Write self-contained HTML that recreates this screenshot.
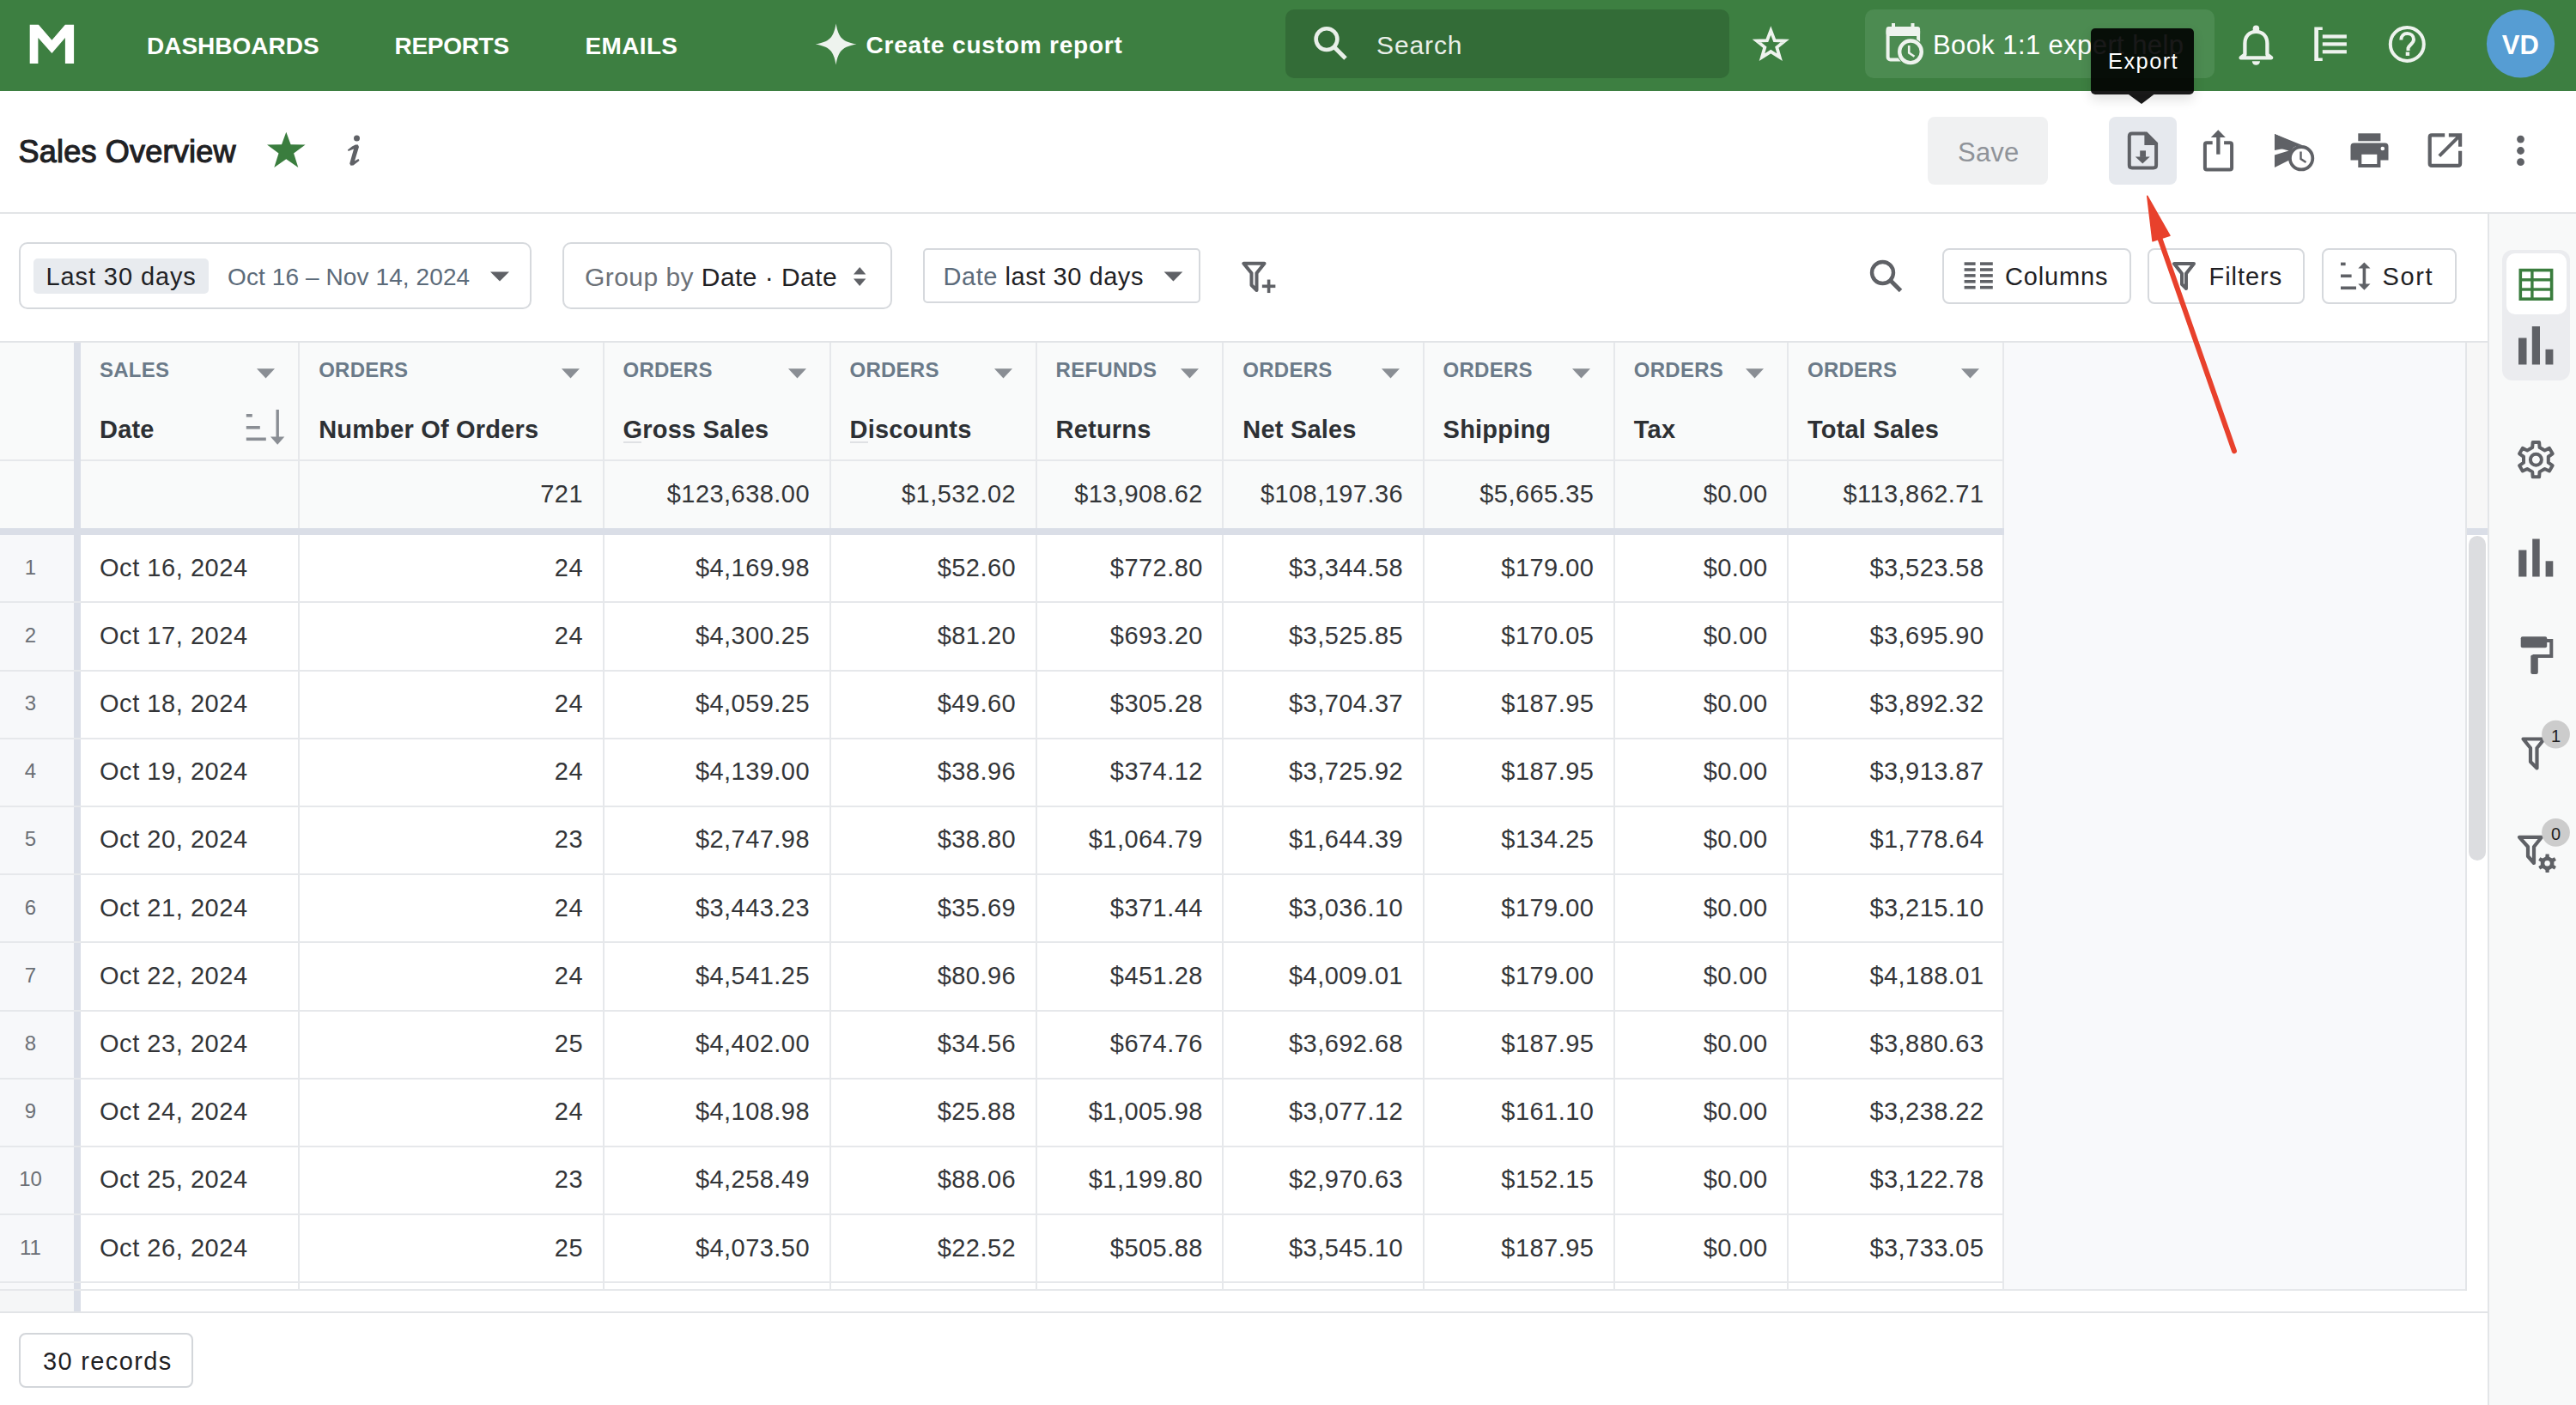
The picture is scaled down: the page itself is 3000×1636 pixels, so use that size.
<!DOCTYPE html>
<html><head><meta charset="utf-8"><style>
html,body{margin:0;padding:0;}
body{width:3000px;height:1636px;position:relative;overflow:hidden;background:#fff;font-family:'Liberation Sans', sans-serif;}
.t{position:absolute;white-space:nowrap;}
.r{position:absolute;}
svg.r{overflow:visible;}
</style></head><body>
<div class="r" style="left:0.00px;top:0.00px;width:3000.00px;height:106.00px;background:#3d7f41;"></div>
<svg class="r" style="left:0px;top:0px;" width="120" height="106" viewBox="0 0 120 106"><polygon fill="#fff" points="34.7,28.8 44.9,28.8 60.4,46.8 75.9,28.8 86.1,28.8 86.1,74.1 75.9,74.1 75.9,44.1 60.4,62.1 44.4,44.1 44.4,74.1 34.7,74.1"/></svg>
<div class="t" style="top:39.50px;font-size:28px;line-height:28px;color:#ffffff;font-weight:700;letter-spacing:0px;font-family:'Liberation Sans', sans-serif;left:171.00px;">DASHBOARDS</div>
<div class="t" style="top:39.70px;font-size:28px;line-height:28px;color:#ffffff;font-weight:700;letter-spacing:-0.3px;font-family:'Liberation Sans', sans-serif;left:459.50px;">REPORTS</div>
<div class="t" style="top:39.70px;font-size:28px;line-height:28px;color:#ffffff;font-weight:700;letter-spacing:0.35px;font-family:'Liberation Sans', sans-serif;left:681.50px;">EMAILS</div>
<svg class="r" style="left:900px;top:0px;" width="120" height="106" viewBox="900 0 120 106"><path fill="#eef3ee" d="M973.6,27.5 C976.5,44 981,48.5 997.5,51.5 C981,54.5 976.5,59 973.6,75.4 C970.7,59 966.2,54.5 949.7,51.5 C966.2,48.5 970.7,44 973.6,27.5 Z"/></svg>
<div class="t" style="top:39.20px;font-size:28px;line-height:28px;color:#ffffff;font-weight:700;letter-spacing:0.8px;font-family:'Liberation Sans', sans-serif;left:1008.50px;">Create custom report</div>
<div class="r" style="left:1497.00px;top:11.00px;width:517.00px;height:80.00px;background:#336c37;border-radius:10px;"></div>
<svg class="r" style="left:1500px;top:0px;" width="100" height="106" viewBox="1500 0 100 106"><circle cx="1545" cy="45.6" r="12.4" fill="none" stroke="#e9efe9" stroke-width="4.6"/><line x1="1554" y1="55" x2="1567" y2="68" stroke="#e9efe9" stroke-width="5"/></svg>
<div class="t" style="top:37.50px;font-size:30px;line-height:30px;color:#e9efe9;font-weight:400;letter-spacing:0.9px;font-family:'Liberation Sans', sans-serif;left:1603.00px;">Search</div>
<svg class="r" style="left:2030px;top:0px;" width="70" height="106" viewBox="2030 0 70 106"><polygon fill="none" stroke="#eef3ee" stroke-width="3.8" stroke-linejoin="miter" points="2062.3,35.6 2066.7,47.2 2078.7,47.6 2069.3,55.1 2072.65,66.6 2062.3,60.05 2051.95,66.6 2055.3,55.1 2045.9,47.6 2057.9,47.2"/></svg>
<div class="r" style="left:2172.00px;top:11.00px;width:407.30px;height:80.00px;background:#4c8b51;border-radius:10px;"></div>
<svg class="r" style="left:2190px;top:0px;" width="60" height="106" viewBox="2190 0 60 106"><rect x="2198.6" y="33" width="35.5" height="36.5" rx="3" fill="none" stroke="#eef3ee" stroke-width="4"/>
<rect x="2196.6" y="31" width="39.5" height="11" rx="3" fill="#eef3ee"/>
<rect x="2203" y="27" width="4" height="6" fill="#eef3ee"/><rect x="2225.5" y="27" width="4" height="6" fill="#eef3ee"/>
<circle cx="2225" cy="60.3" r="16" fill="#4c8b51"/>
<circle cx="2225" cy="60.3" r="12.8" fill="none" stroke="#eef3ee" stroke-width="4.4"/>
<path d="M2223.2,53 V61.5 L2229.5,65.8" fill="none" stroke="#eef3ee" stroke-width="2.6"/></svg>
<div class="t" style="top:37.06px;font-size:31px;line-height:31px;color:#ffffff;font-weight:400;letter-spacing:0.4px;font-family:'Liberation Sans', sans-serif;left:2251.00px;">Book 1:1 expert help</div>
<svg class="r" style="left:2600px;top:0px;" width="60" height="106" viewBox="2600 0 60 106"><path d="M2627.4,36.8 C2619.5,36.8 2614.4,42.5 2614.4,50.5 V63.5 L2609.6,67.3 H2645.2 L2640.4,63.5 V50.5 C2640.4,42.5 2635.3,36.8 2627.4,36.8 Z" fill="none" stroke="#eef3ee" stroke-width="4.3" stroke-linejoin="round"/>
<circle cx="2627.4" cy="33.4" r="3.8" fill="#eef3ee"/>
<path d="M2622.8,71.2 H2632 A4.6,4.6 0 0 1 2622.8,71.2 Z" fill="#eef3ee"/></svg>
<svg class="r" style="left:2690px;top:0px;" width="50" height="106" viewBox="2690 0 50 106"><path d="M2704.8,31.4 H2695.3 V71 H2704.8 V67.5 H2700 V35 H2704.8 Z" fill="#eef3ee"/>
<rect x="2704.8" y="40.4" width="28.1" height="4.2" fill="#eef3ee"/>
<rect x="2704.8" y="49.3" width="28.1" height="4.2" fill="#eef3ee"/>
<rect x="2704.8" y="58.2" width="28.1" height="4.2" fill="#eef3ee"/></svg>
<svg class="r" style="left:2770px;top:0px;" width="70" height="106" viewBox="2770 0 70 106"><circle cx="2803.3" cy="51.4" r="19.5" fill="none" stroke="#eef3ee" stroke-width="4"/>
<path d="M2796.3,46.5 C2796.3,41.5 2799.5,39 2803.5,39 C2807.8,39 2811,42 2811,46 C2811,50.5 2806,52 2804.5,56 V59" fill="none" stroke="#eef3ee" stroke-width="4"/>
<rect x="2801.7" y="60.5" width="4.4" height="4.4" fill="#eef3ee"/></svg>
<svg class="r" style="left:2880px;top:0px;" width="120" height="106" viewBox="2880 0 120 106"><circle cx="2935.5" cy="50.9" r="39.6" fill="#569dd3"/></svg>
<div class="t" style="top:36.76px;font-size:31px;line-height:31px;color:#ffffff;font-weight:700;letter-spacing:0px;font-family:'Liberation Sans', sans-serif;left:2435.30px;width:1000px;text-align:center;">VD</div>
<div class="t" style="top:158.73px;font-size:36px;line-height:36px;color:#1f2124;font-weight:400;letter-spacing:0.22px;font-family:'Liberation Sans', sans-serif;left:21.50px;-webkit-text-stroke:1.15px #1f2124;">Sales Overview</div>
<svg class="r" style="left:300px;top:140px;" width="70" height="70" viewBox="300 140 70 70"><polygon fill="#3a7d3e" points="333.3,153.7 338.6,168.3 355.6,168.6 342.1,178.4 347.3,195 333.3,185.2 319.3,195 324.5,178.4 311,168.6 328,168.3"/></svg>
<svg class="r" style="left:395px;top:150px;" width="35" height="50" viewBox="395 150 35 50"><circle cx="415.5" cy="160.9" r="3.5" fill="#5f6166"/><path d="M404.9,174.4 L410,170.5 L414,168.6 L416.8,168.6 L418,171 L413,187.6 L417.4,185 L418.6,187 L411.5,192.6 L408.5,192.8 L407.2,190.5 L412,173.6 L405.7,176 Z" fill="#5f6166"/></svg>
<div class="r" style="left:0.00px;top:247.00px;width:3000.00px;height:2.00px;background:#e2e4e7;"></div>
<div class="r" style="left:2245.30px;top:136.00px;width:139.70px;height:78.70px;background:#f0f1f2;border-radius:8px;"></div>
<div class="t" style="top:161.56px;font-size:31px;line-height:31px;color:#8f9399;font-weight:400;letter-spacing:0.2px;font-family:'Liberation Sans', sans-serif;left:2280.00px;">Save</div>
<div class="r" style="left:2456.00px;top:136.00px;width:79.00px;height:78.80px;background:#e6e9ee;border-radius:8px;"></div>
<svg class="r" style="left:2470px;top:145px;" width="60" height="60" viewBox="2470 145 60 60"><path d="M2499.5,155.4 H2483 Q2479.8,155.4 2479.8,158.6 V192.2 Q2479.8,195.4 2483,195.4 H2507.9 Q2511.1,195.4 2511.1,192.2 V167 Z" fill="none" stroke="#5f6166" stroke-width="4"/>
<path d="M2497.4,153.4 V168.9 H2513.1 Z" fill="#5f6166"/>
<rect x="2492.2" y="175.4" width="6.8" height="7.5" fill="#5f6166"/>
<path d="M2486.8,182.5 H2503.7 L2495.25,190.6 Z" fill="#5f6166"/></svg>
<svg class="r" style="left:2555px;top:145px;" width="60" height="60" viewBox="2555 145 60 60"><path d="M2576.7,166.3 H2570 Q2567.9,166.3 2567.9,168.5 V195.5 Q2567.9,197.6 2570,197.6 H2597 Q2599.1,197.6 2599.1,195.5 V168.5 Q2599.1,166.3 2597,166.3 H2590.1" fill="none" stroke="#5f6166" stroke-width="4"/>
<rect x="2581.2" y="159.5" width="4.3" height="20.2" fill="#5f6166"/>
<path d="M2574.8,160 H2591.8 L2583.3,151.2 Z" fill="#5f6166"/></svg>
<svg class="r" style="left:2640px;top:145px;" width="65" height="60" viewBox="2640 145 65 60"><path d="M2649,156 L2681,169 L2649,175 V165.5 L2669,170.2 L2649,172 Z" fill="#5f6166"/>
<path d="M2649,156 L2676.5,168.5 A15,15 0 0 0 2667,186 L2649,194.9 V180.5 L2665.5,175.5 L2649,171 Z" fill="#5f6166"/>
<circle cx="2680.1" cy="184.2" r="13.2" fill="none" stroke="#5f6166" stroke-width="3.8"/>
<path d="M2679.5,176.5 V185 L2685.5,189" fill="none" stroke="#5f6166" stroke-width="2.4"/></svg>
<svg class="r" style="left:2730px;top:145px;" width="60" height="60" viewBox="2730 145 60 60"><rect x="2746.3" y="155.3" width="26.1" height="9" fill="#5f6166"/>
<path d="M2741.5,166.5 H2777.5 Q2781.5,166.5 2781.5,170.5 V186.4 H2772.4 V195 H2746.3 V186.4 H2737.5 V170.5 Q2737.5,166.5 2741.5,166.5 Z" fill="#5f6166"/>
<rect x="2750.3" y="179.8" width="18" height="11.2" fill="#fff"/>
<circle cx="2774.8" cy="173" r="2.3" fill="#fff"/></svg>
<svg class="r" style="left:2820px;top:145px;" width="60" height="60" viewBox="2820 145 60 60"><path d="M2847.2,157.4 H2832 Q2829.7,157.4 2829.7,159.7 V190.6 Q2829.7,192.9 2832,192.9 H2862.8 Q2865.1,192.9 2865.1,190.6 V175.7" fill="none" stroke="#5f6166" stroke-width="4.2"/>
<path d="M2851.8,155.3 H2867.2 V170.7 H2863 V162.3 L2842.2,183.1 L2839.4,180.3 L2860.2,159.5 H2851.8 Z" fill="#5f6166"/></svg>
<svg class="r" style="left:2920px;top:145px;" width="30" height="60" viewBox="2920 145 30 60"><circle cx="2935.5" cy="162.1" r="4.4" fill="#5f6166"/><circle cx="2935.5" cy="175.5" r="4.4" fill="#5f6166"/><circle cx="2935.5" cy="188.7" r="4.4" fill="#5f6166"/></svg>
<div class="r" style="left:22.00px;top:282.40px;width:597.00px;height:77.80px;background:#fff;border:2px solid #d6d9dd;box-sizing:border-box;border-radius:10px;"></div>
<div class="r" style="left:39.00px;top:301.00px;width:203.70px;height:41.00px;background:#e8ebef;border-radius:5px;"></div>
<div class="t" style="top:307.95px;font-size:29px;line-height:29px;color:#1f2124;font-weight:400;letter-spacing:0.9px;font-family:'Liberation Sans', sans-serif;left:53.50px;">Last 30 days</div>
<div class="t" style="top:308.80px;font-size:28px;line-height:28px;color:#5c6b7a;font-weight:400;letter-spacing:0.1px;font-family:'Liberation Sans', sans-serif;left:265.00px;">Oct 16 – Nov 14, 2024</div>
<svg class="r" style="left:560px;top:300px;" width="50" height="40" viewBox="560 300 50 40"><path d="M571,316.6 H593 L582,327.6 Z" fill="#5f6166"/></svg>
<div class="r" style="left:654.90px;top:282.40px;width:384.40px;height:77.80px;background:#fff;border:2px solid #d6d9dd;box-sizing:border-box;border-radius:10px;"></div>
<div class="t" style="top:307.61px;font-size:30px;line-height:30px;color:#6c7178;font-weight:400;letter-spacing:0.45px;font-family:'Liberation Sans', sans-serif;left:681.00px;">Group by <span style="color:#1f2124">Date · Date</span></div>
<svg class="r" style="left:990px;top:305px;" width="25" height="35" viewBox="990 305 25 35"><path d="M1001.2,311 L1008.4,319.5 H994 Z" fill="#5f6166"/><path d="M994,324.5 H1008.4 L1001.2,333 Z" fill="#5f6166"/></svg>
<div class="r" style="left:1075.40px;top:289.30px;width:323.00px;height:64.10px;background:#fff;border:2px solid #d6d9dd;box-sizing:border-box;border-radius:5px;"></div>
<div class="t" style="top:307.95px;font-size:29px;line-height:29px;color:#1f2124;font-weight:400;letter-spacing:0.55px;font-family:'Liberation Sans', sans-serif;left:1098.50px;"><span style="color:#5c6b7a">Date</span> last 30 days</div>
<svg class="r" style="left:1345px;top:300px;" width="45" height="40" viewBox="1345 300 45 40"><path d="M1355.6,316.6 H1377.3 L1366.45,327.6 Z" fill="#5f6166"/></svg>
<svg class="r" style="left:1440px;top:295px;" width="55" height="55" viewBox="1440 295 55 55"><path d="M1448.3,306.7 H1472.5 L1463.5,318 V338 L1457.5,332 V318 Z" fill="none" stroke="#5f6166" stroke-width="4" stroke-linejoin="round"/>
<rect x="1469.85" y="331.5" width="15.5" height="3.6" fill="#5f6166"/><rect x="1475.8" y="325.55" width="3.6" height="15.5" fill="#5f6166"/></svg>
<svg class="r" style="left:2170px;top:295px;" width="55" height="55" viewBox="2170 295 55 55"><circle cx="2192.5" cy="317.5" r="12.5" fill="none" stroke="#5f6166" stroke-width="4.4"/><line x1="2201.5" y1="326.5" x2="2213.5" y2="338.5" stroke="#5f6166" stroke-width="5"/></svg>
<div class="r" style="left:2262.40px;top:289.30px;width:220.00px;height:65.20px;background:#fff;border:2px solid #d6d9dd;box-sizing:border-box;border-radius:8px;"></div>
<svg class="r" style="left:2280px;top:300px;" width="50" height="45" viewBox="2280 300 50 45"><rect x="2287.6" y="305.3" width="13" height="3.6" fill="#5f6166"/><rect x="2306" y="305.3" width="14.8" height="3.6" fill="#5f6166"/><rect x="2287.6" y="312.2" width="13" height="3.6" fill="#5f6166"/><rect x="2306" y="312.2" width="14.8" height="3.6" fill="#5f6166"/><rect x="2287.6" y="319.1" width="13" height="3.6" fill="#5f6166"/><rect x="2306" y="319.1" width="14.8" height="3.6" fill="#5f6166"/><rect x="2287.6" y="326.0" width="13" height="3.6" fill="#5f6166"/><rect x="2306" y="326.0" width="14.8" height="3.6" fill="#5f6166"/><rect x="2287.6" y="332.9" width="13" height="3.6" fill="#5f6166"/><rect x="2306" y="332.9" width="14.8" height="3.6" fill="#5f6166"/></svg>
<div class="t" style="top:307.55px;font-size:29px;line-height:29px;color:#1f2124;font-weight:400;letter-spacing:0.85px;font-family:'Liberation Sans', sans-serif;left:2335.00px;">Columns</div>
<div class="r" style="left:2500.50px;top:289.30px;width:183.70px;height:65.20px;background:#fff;border:2px solid #d6d9dd;box-sizing:border-box;border-radius:8px;"></div>
<svg class="r" style="left:2520px;top:295px;" width="50" height="50" viewBox="2520 295 50 50"><path d="M2532,307 H2555 L2546,318.5 V336 L2541,331 V318.5 Z" fill="none" stroke="#5f6166" stroke-width="4" stroke-linejoin="round"/></svg>
<div class="t" style="top:307.55px;font-size:29px;line-height:29px;color:#1f2124;font-weight:400;letter-spacing:0.95px;font-family:'Liberation Sans', sans-serif;left:2572.50px;">Filters</div>
<div class="r" style="left:2703.70px;top:289.30px;width:156.90px;height:65.20px;background:#fff;border:2px solid #d6d9dd;box-sizing:border-box;border-radius:8px;"></div>
<svg class="r" style="left:2720px;top:300px;" width="50" height="45" viewBox="2720 300 50 45"><rect x="2726" y="305.6" width="5.6" height="3.6" fill="#5f6166"/>
<rect x="2726" y="319.5" width="12.6" height="3.6" fill="#5f6166"/>
<rect x="2726" y="333.5" width="18" height="3.6" fill="#5f6166"/>
<rect x="2751.6" y="311" width="3.6" height="21" fill="#5f6166"/>
<path d="M2746.3,312.5 L2753.4,305.6 L2760.5,312.5 Z" fill="#5f6166"/><path d="M2746.3,330.5 L2753.4,337.7 L2760.5,330.5 Z" fill="#5f6166"/></svg>
<div class="t" style="top:307.55px;font-size:29px;line-height:29px;color:#1f2124;font-weight:400;letter-spacing:1.6px;font-family:'Liberation Sans', sans-serif;left:2774.50px;">Sort</div>
<div class="r" style="left:0.00px;top:397.00px;width:2897.00px;height:2.00px;background:#e2e4e7;"></div>
<div class="r" style="left:0.00px;top:399.00px;width:2334.00px;height:138.00px;background:#f9fafa;"></div>
<div class="r" style="left:0.00px;top:537.00px;width:2334.00px;height:78.00px;background:#f9fafa;"></div>
<div class="r" style="left:2334.00px;top:399.00px;width:536.50px;height:1102.00px;background:#f8f9fb;"></div>
<div class="r" style="left:0.00px;top:623.00px;width:86.00px;height:904.00px;background:#f7f8fa;"></div>
<div class="r" style="left:94.00px;top:623.00px;width:2240.00px;height:878.00px;background:#ffffff;"></div>
<div class="r" style="left:94.00px;top:1503.00px;width:2776.50px;height:24.00px;background:#ffffff;"></div>
<div class="r" style="left:0.00px;top:1503.00px;width:86.00px;height:24.00px;background:#f5f6f7;"></div>
<div class="r" style="left:0.00px;top:535.00px;width:2334.00px;height:2.00px;background:#e6e8eb;"></div>
<div class="r" style="left:0.00px;top:615.00px;width:2334.00px;height:8.00px;background:#dadee7;"></div>
<div class="r" style="left:86.00px;top:399.00px;width:8.00px;height:1128.00px;background:#dadee7;"></div>
<div class="r" style="left:347.20px;top:399.00px;width:2.00px;height:216.00px;background:#e6e8eb;"></div>
<div class="r" style="left:347.20px;top:623.00px;width:2.00px;height:878.00px;background:#e6e8eb;"></div>
<div class="r" style="left:701.50px;top:399.00px;width:2.00px;height:216.00px;background:#e6e8eb;"></div>
<div class="r" style="left:701.50px;top:623.00px;width:2.00px;height:878.00px;background:#e6e8eb;"></div>
<div class="r" style="left:965.50px;top:399.00px;width:2.00px;height:216.00px;background:#e6e8eb;"></div>
<div class="r" style="left:965.50px;top:623.00px;width:2.00px;height:878.00px;background:#e6e8eb;"></div>
<div class="r" style="left:1205.60px;top:399.00px;width:2.00px;height:216.00px;background:#e6e8eb;"></div>
<div class="r" style="left:1205.60px;top:623.00px;width:2.00px;height:878.00px;background:#e6e8eb;"></div>
<div class="r" style="left:1423.30px;top:399.00px;width:2.00px;height:216.00px;background:#e6e8eb;"></div>
<div class="r" style="left:1423.30px;top:623.00px;width:2.00px;height:878.00px;background:#e6e8eb;"></div>
<div class="r" style="left:1656.60px;top:399.00px;width:2.00px;height:216.00px;background:#e6e8eb;"></div>
<div class="r" style="left:1656.60px;top:623.00px;width:2.00px;height:878.00px;background:#e6e8eb;"></div>
<div class="r" style="left:1878.80px;top:399.00px;width:2.00px;height:216.00px;background:#e6e8eb;"></div>
<div class="r" style="left:1878.80px;top:623.00px;width:2.00px;height:878.00px;background:#e6e8eb;"></div>
<div class="r" style="left:2081.00px;top:399.00px;width:2.00px;height:216.00px;background:#e6e8eb;"></div>
<div class="r" style="left:2081.00px;top:623.00px;width:2.00px;height:878.00px;background:#e6e8eb;"></div>
<div class="r" style="left:2332.00px;top:399.00px;width:2.00px;height:216.00px;background:#e6e8eb;"></div>
<div class="r" style="left:2332.00px;top:623.00px;width:2.00px;height:878.00px;background:#e6e8eb;"></div>
<div class="r" style="left:0.00px;top:700.30px;width:2334.00px;height:2.00px;background:#e6e8eb;"></div>
<div class="r" style="left:0.00px;top:779.50px;width:2334.00px;height:2.00px;background:#e6e8eb;"></div>
<div class="r" style="left:0.00px;top:858.70px;width:2334.00px;height:2.00px;background:#e6e8eb;"></div>
<div class="r" style="left:0.00px;top:937.90px;width:2334.00px;height:2.00px;background:#e6e8eb;"></div>
<div class="r" style="left:0.00px;top:1017.10px;width:2334.00px;height:2.00px;background:#e6e8eb;"></div>
<div class="r" style="left:0.00px;top:1096.30px;width:2334.00px;height:2.00px;background:#e6e8eb;"></div>
<div class="r" style="left:0.00px;top:1175.50px;width:2334.00px;height:2.00px;background:#e6e8eb;"></div>
<div class="r" style="left:0.00px;top:1254.70px;width:2334.00px;height:2.00px;background:#e6e8eb;"></div>
<div class="r" style="left:0.00px;top:1333.90px;width:2334.00px;height:2.00px;background:#e6e8eb;"></div>
<div class="r" style="left:0.00px;top:1413.10px;width:2334.00px;height:2.00px;background:#e6e8eb;"></div>
<div class="r" style="left:0.00px;top:1492.30px;width:2334.00px;height:2.00px;background:#e6e8eb;"></div>
<div class="r" style="left:0.00px;top:1501.00px;width:2872.00px;height:2.00px;background:#e6e8eb;"></div>
<div class="r" style="left:0.00px;top:1527.00px;width:2897.00px;height:2.00px;background:#e2e4e7;"></div>
<div class="r" style="left:2870.50px;top:399.00px;width:2.00px;height:1104.00px;background:#e3e5e8;"></div>
<div class="t" style="top:419.18px;font-size:24px;line-height:24px;color:#6b7a89;font-weight:700;letter-spacing:0.25px;font-family:'Liberation Sans', sans-serif;left:116.00px;">SALES</div>
<div class="t" style="top:486.45px;font-size:29px;line-height:29px;color:#2d3034;font-weight:700;letter-spacing:0.2px;font-family:'Liberation Sans', sans-serif;left:116.00px;">Date</div>
<svg class="r" style="left:295.2px;top:420px;" width="30" height="25" viewBox="295.2 420 30 25"><path d="M299.2,429.3 H320.2 L309.7,440.5 Z" fill="#8a8e94"/></svg>
<div class="t" style="top:419.18px;font-size:24px;line-height:24px;color:#6b7a89;font-weight:700;letter-spacing:0.25px;font-family:'Liberation Sans', sans-serif;left:371.20px;">ORDERS</div>
<div class="t" style="top:486.45px;font-size:29px;line-height:29px;color:#2d3034;font-weight:700;letter-spacing:0.2px;font-family:'Liberation Sans', sans-serif;left:371.20px;">Number Of Orders</div>
<svg class="r" style="left:649.5px;top:420px;" width="30" height="25" viewBox="649.5 420 30 25"><path d="M653.5,429.3 H674.5 L664.0,440.5 Z" fill="#8a8e94"/></svg>
<div class="t" style="top:419.18px;font-size:24px;line-height:24px;color:#6b7a89;font-weight:700;letter-spacing:0.25px;font-family:'Liberation Sans', sans-serif;left:725.50px;">ORDERS</div>
<div class="t" style="top:486.45px;font-size:29px;line-height:29px;color:#2d3034;font-weight:700;letter-spacing:0.2px;font-family:'Liberation Sans', sans-serif;left:725.50px;">Gross Sales</div>
<svg class="r" style="left:913.5px;top:420px;" width="30" height="25" viewBox="913.5 420 30 25"><path d="M917.5,429.3 H938.5 L928.0,440.5 Z" fill="#8a8e94"/></svg>
<div class="t" style="top:419.18px;font-size:24px;line-height:24px;color:#6b7a89;font-weight:700;letter-spacing:0.25px;font-family:'Liberation Sans', sans-serif;left:989.50px;">ORDERS</div>
<div class="t" style="top:486.45px;font-size:29px;line-height:29px;color:#2d3034;font-weight:700;letter-spacing:0.2px;font-family:'Liberation Sans', sans-serif;left:989.50px;">Discounts</div>
<svg class="r" style="left:1153.6px;top:420px;" width="30" height="25" viewBox="1153.6 420 30 25"><path d="M1157.6,429.3 H1178.6 L1168.1,440.5 Z" fill="#8a8e94"/></svg>
<div class="t" style="top:419.18px;font-size:24px;line-height:24px;color:#6b7a89;font-weight:700;letter-spacing:0.25px;font-family:'Liberation Sans', sans-serif;left:1229.60px;">REFUNDS</div>
<div class="t" style="top:486.45px;font-size:29px;line-height:29px;color:#2d3034;font-weight:700;letter-spacing:0.2px;font-family:'Liberation Sans', sans-serif;left:1229.60px;">Returns</div>
<svg class="r" style="left:1371.3px;top:420px;" width="30" height="25" viewBox="1371.3 420 30 25"><path d="M1375.3,429.3 H1396.3 L1385.8,440.5 Z" fill="#8a8e94"/></svg>
<div class="t" style="top:419.18px;font-size:24px;line-height:24px;color:#6b7a89;font-weight:700;letter-spacing:0.25px;font-family:'Liberation Sans', sans-serif;left:1447.30px;">ORDERS</div>
<div class="t" style="top:486.45px;font-size:29px;line-height:29px;color:#2d3034;font-weight:700;letter-spacing:0.2px;font-family:'Liberation Sans', sans-serif;left:1447.30px;">Net Sales</div>
<svg class="r" style="left:1604.6px;top:420px;" width="30" height="25" viewBox="1604.6 420 30 25"><path d="M1608.6,429.3 H1629.6 L1619.1,440.5 Z" fill="#8a8e94"/></svg>
<div class="t" style="top:419.18px;font-size:24px;line-height:24px;color:#6b7a89;font-weight:700;letter-spacing:0.25px;font-family:'Liberation Sans', sans-serif;left:1680.60px;">ORDERS</div>
<div class="t" style="top:486.45px;font-size:29px;line-height:29px;color:#2d3034;font-weight:700;letter-spacing:0.2px;font-family:'Liberation Sans', sans-serif;left:1680.60px;">Shipping</div>
<svg class="r" style="left:1826.8px;top:420px;" width="30" height="25" viewBox="1826.8 420 30 25"><path d="M1830.8,429.3 H1851.8 L1841.3,440.5 Z" fill="#8a8e94"/></svg>
<div class="t" style="top:419.18px;font-size:24px;line-height:24px;color:#6b7a89;font-weight:700;letter-spacing:0.25px;font-family:'Liberation Sans', sans-serif;left:1902.80px;">ORDERS</div>
<div class="t" style="top:486.45px;font-size:29px;line-height:29px;color:#2d3034;font-weight:700;letter-spacing:0.2px;font-family:'Liberation Sans', sans-serif;left:1902.80px;">Tax</div>
<svg class="r" style="left:2029px;top:420px;" width="30" height="25" viewBox="2029 420 30 25"><path d="M2033,429.3 H2054 L2043.5,440.5 Z" fill="#8a8e94"/></svg>
<div class="t" style="top:419.18px;font-size:24px;line-height:24px;color:#6b7a89;font-weight:700;letter-spacing:0.25px;font-family:'Liberation Sans', sans-serif;left:2105.00px;">ORDERS</div>
<div class="t" style="top:486.45px;font-size:29px;line-height:29px;color:#2d3034;font-weight:700;letter-spacing:0.2px;font-family:'Liberation Sans', sans-serif;left:2105.00px;">Total Sales</div>
<svg class="r" style="left:2280px;top:420px;" width="30" height="25" viewBox="2280 420 30 25"><path d="M2284,429.3 H2305 L2294.5,440.5 Z" fill="#8a8e94"/></svg>
<div class="r" style="left:726.00px;top:514.00px;width:21.00px;height:2.00px;background:#dfe1e4;"></div>
<div class="r" style="left:990.00px;top:514.00px;width:21.00px;height:2.00px;background:#dfe1e4;"></div>
<svg class="r" style="left:280px;top:470px;" width="60" height="55" viewBox="280 470 60 55"><rect x="286.8" y="482" width="7" height="3.6" fill="#8a8e94"/>
<rect x="286.8" y="496" width="16" height="3.6" fill="#8a8e94"/>
<rect x="286.8" y="509.5" width="23" height="3.6" fill="#8a8e94"/>
<rect x="321.5" y="477" width="3.4" height="33" fill="#8a8e94"/>
<path d="M315,508.5 H331.3 L323.2,517.8 Z" fill="#8a8e94"/></svg>
<div class="t" style="top:561.45px;font-size:29px;line-height:29px;color:#333538;font-weight:400;letter-spacing:0.45px;font-family:'Liberation Sans', sans-serif;right:2321.00px;text-align:right;">721</div>
<div class="t" style="top:561.45px;font-size:29px;line-height:29px;color:#333538;font-weight:400;letter-spacing:0.45px;font-family:'Liberation Sans', sans-serif;right:2057.00px;text-align:right;">$123,638.00</div>
<div class="t" style="top:561.45px;font-size:29px;line-height:29px;color:#333538;font-weight:400;letter-spacing:0.45px;font-family:'Liberation Sans', sans-serif;right:1816.90px;text-align:right;">$1,532.02</div>
<div class="t" style="top:561.45px;font-size:29px;line-height:29px;color:#333538;font-weight:400;letter-spacing:0.45px;font-family:'Liberation Sans', sans-serif;right:1599.20px;text-align:right;">$13,908.62</div>
<div class="t" style="top:561.45px;font-size:29px;line-height:29px;color:#333538;font-weight:400;letter-spacing:0.45px;font-family:'Liberation Sans', sans-serif;right:1365.90px;text-align:right;">$108,197.36</div>
<div class="t" style="top:561.45px;font-size:29px;line-height:29px;color:#333538;font-weight:400;letter-spacing:0.45px;font-family:'Liberation Sans', sans-serif;right:1143.70px;text-align:right;">$5,665.35</div>
<div class="t" style="top:561.45px;font-size:29px;line-height:29px;color:#333538;font-weight:400;letter-spacing:0.45px;font-family:'Liberation Sans', sans-serif;right:941.50px;text-align:right;">$0.00</div>
<div class="t" style="top:561.45px;font-size:29px;line-height:29px;color:#333538;font-weight:400;letter-spacing:0.45px;font-family:'Liberation Sans', sans-serif;right:689.50px;text-align:right;">$113,862.71</div>
<div class="t" style="top:646.65px;font-size:29px;line-height:29px;color:#333538;font-weight:400;letter-spacing:0.55px;font-family:'Liberation Sans', sans-serif;left:116.00px;">Oct 16, 2024</div>
<div class="t" style="top:646.65px;font-size:29px;line-height:29px;color:#333538;font-weight:400;letter-spacing:0.45px;font-family:'Liberation Sans', sans-serif;right:2321.00px;text-align:right;">24</div>
<div class="t" style="top:646.65px;font-size:29px;line-height:29px;color:#333538;font-weight:400;letter-spacing:0.45px;font-family:'Liberation Sans', sans-serif;right:2057.00px;text-align:right;">$4,169.98</div>
<div class="t" style="top:646.65px;font-size:29px;line-height:29px;color:#333538;font-weight:400;letter-spacing:0.45px;font-family:'Liberation Sans', sans-serif;right:1816.90px;text-align:right;">$52.60</div>
<div class="t" style="top:646.65px;font-size:29px;line-height:29px;color:#333538;font-weight:400;letter-spacing:0.45px;font-family:'Liberation Sans', sans-serif;right:1599.20px;text-align:right;">$772.80</div>
<div class="t" style="top:646.65px;font-size:29px;line-height:29px;color:#333538;font-weight:400;letter-spacing:0.45px;font-family:'Liberation Sans', sans-serif;right:1365.90px;text-align:right;">$3,344.58</div>
<div class="t" style="top:646.65px;font-size:29px;line-height:29px;color:#333538;font-weight:400;letter-spacing:0.45px;font-family:'Liberation Sans', sans-serif;right:1143.70px;text-align:right;">$179.00</div>
<div class="t" style="top:646.65px;font-size:29px;line-height:29px;color:#333538;font-weight:400;letter-spacing:0.45px;font-family:'Liberation Sans', sans-serif;right:941.50px;text-align:right;">$0.00</div>
<div class="t" style="top:646.65px;font-size:29px;line-height:29px;color:#333538;font-weight:400;letter-spacing:0.45px;font-family:'Liberation Sans', sans-serif;right:689.50px;text-align:right;">$3,523.58</div>
<div class="t" style="top:648.68px;font-size:24px;line-height:24px;color:#6b6f75;font-weight:400;letter-spacing:0px;font-family:'Liberation Sans', sans-serif;left:-464.50px;width:1000px;text-align:center;">1</div>
<div class="t" style="top:725.85px;font-size:29px;line-height:29px;color:#333538;font-weight:400;letter-spacing:0.55px;font-family:'Liberation Sans', sans-serif;left:116.00px;">Oct 17, 2024</div>
<div class="t" style="top:725.85px;font-size:29px;line-height:29px;color:#333538;font-weight:400;letter-spacing:0.45px;font-family:'Liberation Sans', sans-serif;right:2321.00px;text-align:right;">24</div>
<div class="t" style="top:725.85px;font-size:29px;line-height:29px;color:#333538;font-weight:400;letter-spacing:0.45px;font-family:'Liberation Sans', sans-serif;right:2057.00px;text-align:right;">$4,300.25</div>
<div class="t" style="top:725.85px;font-size:29px;line-height:29px;color:#333538;font-weight:400;letter-spacing:0.45px;font-family:'Liberation Sans', sans-serif;right:1816.90px;text-align:right;">$81.20</div>
<div class="t" style="top:725.85px;font-size:29px;line-height:29px;color:#333538;font-weight:400;letter-spacing:0.45px;font-family:'Liberation Sans', sans-serif;right:1599.20px;text-align:right;">$693.20</div>
<div class="t" style="top:725.85px;font-size:29px;line-height:29px;color:#333538;font-weight:400;letter-spacing:0.45px;font-family:'Liberation Sans', sans-serif;right:1365.90px;text-align:right;">$3,525.85</div>
<div class="t" style="top:725.85px;font-size:29px;line-height:29px;color:#333538;font-weight:400;letter-spacing:0.45px;font-family:'Liberation Sans', sans-serif;right:1143.70px;text-align:right;">$170.05</div>
<div class="t" style="top:725.85px;font-size:29px;line-height:29px;color:#333538;font-weight:400;letter-spacing:0.45px;font-family:'Liberation Sans', sans-serif;right:941.50px;text-align:right;">$0.00</div>
<div class="t" style="top:725.85px;font-size:29px;line-height:29px;color:#333538;font-weight:400;letter-spacing:0.45px;font-family:'Liberation Sans', sans-serif;right:689.50px;text-align:right;">$3,695.90</div>
<div class="t" style="top:727.88px;font-size:24px;line-height:24px;color:#6b6f75;font-weight:400;letter-spacing:0px;font-family:'Liberation Sans', sans-serif;left:-464.50px;width:1000px;text-align:center;">2</div>
<div class="t" style="top:805.05px;font-size:29px;line-height:29px;color:#333538;font-weight:400;letter-spacing:0.55px;font-family:'Liberation Sans', sans-serif;left:116.00px;">Oct 18, 2024</div>
<div class="t" style="top:805.05px;font-size:29px;line-height:29px;color:#333538;font-weight:400;letter-spacing:0.45px;font-family:'Liberation Sans', sans-serif;right:2321.00px;text-align:right;">24</div>
<div class="t" style="top:805.05px;font-size:29px;line-height:29px;color:#333538;font-weight:400;letter-spacing:0.45px;font-family:'Liberation Sans', sans-serif;right:2057.00px;text-align:right;">$4,059.25</div>
<div class="t" style="top:805.05px;font-size:29px;line-height:29px;color:#333538;font-weight:400;letter-spacing:0.45px;font-family:'Liberation Sans', sans-serif;right:1816.90px;text-align:right;">$49.60</div>
<div class="t" style="top:805.05px;font-size:29px;line-height:29px;color:#333538;font-weight:400;letter-spacing:0.45px;font-family:'Liberation Sans', sans-serif;right:1599.20px;text-align:right;">$305.28</div>
<div class="t" style="top:805.05px;font-size:29px;line-height:29px;color:#333538;font-weight:400;letter-spacing:0.45px;font-family:'Liberation Sans', sans-serif;right:1365.90px;text-align:right;">$3,704.37</div>
<div class="t" style="top:805.05px;font-size:29px;line-height:29px;color:#333538;font-weight:400;letter-spacing:0.45px;font-family:'Liberation Sans', sans-serif;right:1143.70px;text-align:right;">$187.95</div>
<div class="t" style="top:805.05px;font-size:29px;line-height:29px;color:#333538;font-weight:400;letter-spacing:0.45px;font-family:'Liberation Sans', sans-serif;right:941.50px;text-align:right;">$0.00</div>
<div class="t" style="top:805.05px;font-size:29px;line-height:29px;color:#333538;font-weight:400;letter-spacing:0.45px;font-family:'Liberation Sans', sans-serif;right:689.50px;text-align:right;">$3,892.32</div>
<div class="t" style="top:807.08px;font-size:24px;line-height:24px;color:#6b6f75;font-weight:400;letter-spacing:0px;font-family:'Liberation Sans', sans-serif;left:-464.50px;width:1000px;text-align:center;">3</div>
<div class="t" style="top:884.25px;font-size:29px;line-height:29px;color:#333538;font-weight:400;letter-spacing:0.55px;font-family:'Liberation Sans', sans-serif;left:116.00px;">Oct 19, 2024</div>
<div class="t" style="top:884.25px;font-size:29px;line-height:29px;color:#333538;font-weight:400;letter-spacing:0.45px;font-family:'Liberation Sans', sans-serif;right:2321.00px;text-align:right;">24</div>
<div class="t" style="top:884.25px;font-size:29px;line-height:29px;color:#333538;font-weight:400;letter-spacing:0.45px;font-family:'Liberation Sans', sans-serif;right:2057.00px;text-align:right;">$4,139.00</div>
<div class="t" style="top:884.25px;font-size:29px;line-height:29px;color:#333538;font-weight:400;letter-spacing:0.45px;font-family:'Liberation Sans', sans-serif;right:1816.90px;text-align:right;">$38.96</div>
<div class="t" style="top:884.25px;font-size:29px;line-height:29px;color:#333538;font-weight:400;letter-spacing:0.45px;font-family:'Liberation Sans', sans-serif;right:1599.20px;text-align:right;">$374.12</div>
<div class="t" style="top:884.25px;font-size:29px;line-height:29px;color:#333538;font-weight:400;letter-spacing:0.45px;font-family:'Liberation Sans', sans-serif;right:1365.90px;text-align:right;">$3,725.92</div>
<div class="t" style="top:884.25px;font-size:29px;line-height:29px;color:#333538;font-weight:400;letter-spacing:0.45px;font-family:'Liberation Sans', sans-serif;right:1143.70px;text-align:right;">$187.95</div>
<div class="t" style="top:884.25px;font-size:29px;line-height:29px;color:#333538;font-weight:400;letter-spacing:0.45px;font-family:'Liberation Sans', sans-serif;right:941.50px;text-align:right;">$0.00</div>
<div class="t" style="top:884.25px;font-size:29px;line-height:29px;color:#333538;font-weight:400;letter-spacing:0.45px;font-family:'Liberation Sans', sans-serif;right:689.50px;text-align:right;">$3,913.87</div>
<div class="t" style="top:886.28px;font-size:24px;line-height:24px;color:#6b6f75;font-weight:400;letter-spacing:0px;font-family:'Liberation Sans', sans-serif;left:-464.50px;width:1000px;text-align:center;">4</div>
<div class="t" style="top:963.45px;font-size:29px;line-height:29px;color:#333538;font-weight:400;letter-spacing:0.55px;font-family:'Liberation Sans', sans-serif;left:116.00px;">Oct 20, 2024</div>
<div class="t" style="top:963.45px;font-size:29px;line-height:29px;color:#333538;font-weight:400;letter-spacing:0.45px;font-family:'Liberation Sans', sans-serif;right:2321.00px;text-align:right;">23</div>
<div class="t" style="top:963.45px;font-size:29px;line-height:29px;color:#333538;font-weight:400;letter-spacing:0.45px;font-family:'Liberation Sans', sans-serif;right:2057.00px;text-align:right;">$2,747.98</div>
<div class="t" style="top:963.45px;font-size:29px;line-height:29px;color:#333538;font-weight:400;letter-spacing:0.45px;font-family:'Liberation Sans', sans-serif;right:1816.90px;text-align:right;">$38.80</div>
<div class="t" style="top:963.45px;font-size:29px;line-height:29px;color:#333538;font-weight:400;letter-spacing:0.45px;font-family:'Liberation Sans', sans-serif;right:1599.20px;text-align:right;">$1,064.79</div>
<div class="t" style="top:963.45px;font-size:29px;line-height:29px;color:#333538;font-weight:400;letter-spacing:0.45px;font-family:'Liberation Sans', sans-serif;right:1365.90px;text-align:right;">$1,644.39</div>
<div class="t" style="top:963.45px;font-size:29px;line-height:29px;color:#333538;font-weight:400;letter-spacing:0.45px;font-family:'Liberation Sans', sans-serif;right:1143.70px;text-align:right;">$134.25</div>
<div class="t" style="top:963.45px;font-size:29px;line-height:29px;color:#333538;font-weight:400;letter-spacing:0.45px;font-family:'Liberation Sans', sans-serif;right:941.50px;text-align:right;">$0.00</div>
<div class="t" style="top:963.45px;font-size:29px;line-height:29px;color:#333538;font-weight:400;letter-spacing:0.45px;font-family:'Liberation Sans', sans-serif;right:689.50px;text-align:right;">$1,778.64</div>
<div class="t" style="top:965.48px;font-size:24px;line-height:24px;color:#6b6f75;font-weight:400;letter-spacing:0px;font-family:'Liberation Sans', sans-serif;left:-464.50px;width:1000px;text-align:center;">5</div>
<div class="t" style="top:1042.65px;font-size:29px;line-height:29px;color:#333538;font-weight:400;letter-spacing:0.55px;font-family:'Liberation Sans', sans-serif;left:116.00px;">Oct 21, 2024</div>
<div class="t" style="top:1042.65px;font-size:29px;line-height:29px;color:#333538;font-weight:400;letter-spacing:0.45px;font-family:'Liberation Sans', sans-serif;right:2321.00px;text-align:right;">24</div>
<div class="t" style="top:1042.65px;font-size:29px;line-height:29px;color:#333538;font-weight:400;letter-spacing:0.45px;font-family:'Liberation Sans', sans-serif;right:2057.00px;text-align:right;">$3,443.23</div>
<div class="t" style="top:1042.65px;font-size:29px;line-height:29px;color:#333538;font-weight:400;letter-spacing:0.45px;font-family:'Liberation Sans', sans-serif;right:1816.90px;text-align:right;">$35.69</div>
<div class="t" style="top:1042.65px;font-size:29px;line-height:29px;color:#333538;font-weight:400;letter-spacing:0.45px;font-family:'Liberation Sans', sans-serif;right:1599.20px;text-align:right;">$371.44</div>
<div class="t" style="top:1042.65px;font-size:29px;line-height:29px;color:#333538;font-weight:400;letter-spacing:0.45px;font-family:'Liberation Sans', sans-serif;right:1365.90px;text-align:right;">$3,036.10</div>
<div class="t" style="top:1042.65px;font-size:29px;line-height:29px;color:#333538;font-weight:400;letter-spacing:0.45px;font-family:'Liberation Sans', sans-serif;right:1143.70px;text-align:right;">$179.00</div>
<div class="t" style="top:1042.65px;font-size:29px;line-height:29px;color:#333538;font-weight:400;letter-spacing:0.45px;font-family:'Liberation Sans', sans-serif;right:941.50px;text-align:right;">$0.00</div>
<div class="t" style="top:1042.65px;font-size:29px;line-height:29px;color:#333538;font-weight:400;letter-spacing:0.45px;font-family:'Liberation Sans', sans-serif;right:689.50px;text-align:right;">$3,215.10</div>
<div class="t" style="top:1044.68px;font-size:24px;line-height:24px;color:#6b6f75;font-weight:400;letter-spacing:0px;font-family:'Liberation Sans', sans-serif;left:-464.50px;width:1000px;text-align:center;">6</div>
<div class="t" style="top:1121.85px;font-size:29px;line-height:29px;color:#333538;font-weight:400;letter-spacing:0.55px;font-family:'Liberation Sans', sans-serif;left:116.00px;">Oct 22, 2024</div>
<div class="t" style="top:1121.85px;font-size:29px;line-height:29px;color:#333538;font-weight:400;letter-spacing:0.45px;font-family:'Liberation Sans', sans-serif;right:2321.00px;text-align:right;">24</div>
<div class="t" style="top:1121.85px;font-size:29px;line-height:29px;color:#333538;font-weight:400;letter-spacing:0.45px;font-family:'Liberation Sans', sans-serif;right:2057.00px;text-align:right;">$4,541.25</div>
<div class="t" style="top:1121.85px;font-size:29px;line-height:29px;color:#333538;font-weight:400;letter-spacing:0.45px;font-family:'Liberation Sans', sans-serif;right:1816.90px;text-align:right;">$80.96</div>
<div class="t" style="top:1121.85px;font-size:29px;line-height:29px;color:#333538;font-weight:400;letter-spacing:0.45px;font-family:'Liberation Sans', sans-serif;right:1599.20px;text-align:right;">$451.28</div>
<div class="t" style="top:1121.85px;font-size:29px;line-height:29px;color:#333538;font-weight:400;letter-spacing:0.45px;font-family:'Liberation Sans', sans-serif;right:1365.90px;text-align:right;">$4,009.01</div>
<div class="t" style="top:1121.85px;font-size:29px;line-height:29px;color:#333538;font-weight:400;letter-spacing:0.45px;font-family:'Liberation Sans', sans-serif;right:1143.70px;text-align:right;">$179.00</div>
<div class="t" style="top:1121.85px;font-size:29px;line-height:29px;color:#333538;font-weight:400;letter-spacing:0.45px;font-family:'Liberation Sans', sans-serif;right:941.50px;text-align:right;">$0.00</div>
<div class="t" style="top:1121.85px;font-size:29px;line-height:29px;color:#333538;font-weight:400;letter-spacing:0.45px;font-family:'Liberation Sans', sans-serif;right:689.50px;text-align:right;">$4,188.01</div>
<div class="t" style="top:1123.88px;font-size:24px;line-height:24px;color:#6b6f75;font-weight:400;letter-spacing:0px;font-family:'Liberation Sans', sans-serif;left:-464.50px;width:1000px;text-align:center;">7</div>
<div class="t" style="top:1201.05px;font-size:29px;line-height:29px;color:#333538;font-weight:400;letter-spacing:0.55px;font-family:'Liberation Sans', sans-serif;left:116.00px;">Oct 23, 2024</div>
<div class="t" style="top:1201.05px;font-size:29px;line-height:29px;color:#333538;font-weight:400;letter-spacing:0.45px;font-family:'Liberation Sans', sans-serif;right:2321.00px;text-align:right;">25</div>
<div class="t" style="top:1201.05px;font-size:29px;line-height:29px;color:#333538;font-weight:400;letter-spacing:0.45px;font-family:'Liberation Sans', sans-serif;right:2057.00px;text-align:right;">$4,402.00</div>
<div class="t" style="top:1201.05px;font-size:29px;line-height:29px;color:#333538;font-weight:400;letter-spacing:0.45px;font-family:'Liberation Sans', sans-serif;right:1816.90px;text-align:right;">$34.56</div>
<div class="t" style="top:1201.05px;font-size:29px;line-height:29px;color:#333538;font-weight:400;letter-spacing:0.45px;font-family:'Liberation Sans', sans-serif;right:1599.20px;text-align:right;">$674.76</div>
<div class="t" style="top:1201.05px;font-size:29px;line-height:29px;color:#333538;font-weight:400;letter-spacing:0.45px;font-family:'Liberation Sans', sans-serif;right:1365.90px;text-align:right;">$3,692.68</div>
<div class="t" style="top:1201.05px;font-size:29px;line-height:29px;color:#333538;font-weight:400;letter-spacing:0.45px;font-family:'Liberation Sans', sans-serif;right:1143.70px;text-align:right;">$187.95</div>
<div class="t" style="top:1201.05px;font-size:29px;line-height:29px;color:#333538;font-weight:400;letter-spacing:0.45px;font-family:'Liberation Sans', sans-serif;right:941.50px;text-align:right;">$0.00</div>
<div class="t" style="top:1201.05px;font-size:29px;line-height:29px;color:#333538;font-weight:400;letter-spacing:0.45px;font-family:'Liberation Sans', sans-serif;right:689.50px;text-align:right;">$3,880.63</div>
<div class="t" style="top:1203.08px;font-size:24px;line-height:24px;color:#6b6f75;font-weight:400;letter-spacing:0px;font-family:'Liberation Sans', sans-serif;left:-464.50px;width:1000px;text-align:center;">8</div>
<div class="t" style="top:1280.25px;font-size:29px;line-height:29px;color:#333538;font-weight:400;letter-spacing:0.55px;font-family:'Liberation Sans', sans-serif;left:116.00px;">Oct 24, 2024</div>
<div class="t" style="top:1280.25px;font-size:29px;line-height:29px;color:#333538;font-weight:400;letter-spacing:0.45px;font-family:'Liberation Sans', sans-serif;right:2321.00px;text-align:right;">24</div>
<div class="t" style="top:1280.25px;font-size:29px;line-height:29px;color:#333538;font-weight:400;letter-spacing:0.45px;font-family:'Liberation Sans', sans-serif;right:2057.00px;text-align:right;">$4,108.98</div>
<div class="t" style="top:1280.25px;font-size:29px;line-height:29px;color:#333538;font-weight:400;letter-spacing:0.45px;font-family:'Liberation Sans', sans-serif;right:1816.90px;text-align:right;">$25.88</div>
<div class="t" style="top:1280.25px;font-size:29px;line-height:29px;color:#333538;font-weight:400;letter-spacing:0.45px;font-family:'Liberation Sans', sans-serif;right:1599.20px;text-align:right;">$1,005.98</div>
<div class="t" style="top:1280.25px;font-size:29px;line-height:29px;color:#333538;font-weight:400;letter-spacing:0.45px;font-family:'Liberation Sans', sans-serif;right:1365.90px;text-align:right;">$3,077.12</div>
<div class="t" style="top:1280.25px;font-size:29px;line-height:29px;color:#333538;font-weight:400;letter-spacing:0.45px;font-family:'Liberation Sans', sans-serif;right:1143.70px;text-align:right;">$161.10</div>
<div class="t" style="top:1280.25px;font-size:29px;line-height:29px;color:#333538;font-weight:400;letter-spacing:0.45px;font-family:'Liberation Sans', sans-serif;right:941.50px;text-align:right;">$0.00</div>
<div class="t" style="top:1280.25px;font-size:29px;line-height:29px;color:#333538;font-weight:400;letter-spacing:0.45px;font-family:'Liberation Sans', sans-serif;right:689.50px;text-align:right;">$3,238.22</div>
<div class="t" style="top:1282.28px;font-size:24px;line-height:24px;color:#6b6f75;font-weight:400;letter-spacing:0px;font-family:'Liberation Sans', sans-serif;left:-464.50px;width:1000px;text-align:center;">9</div>
<div class="t" style="top:1359.45px;font-size:29px;line-height:29px;color:#333538;font-weight:400;letter-spacing:0.55px;font-family:'Liberation Sans', sans-serif;left:116.00px;">Oct 25, 2024</div>
<div class="t" style="top:1359.45px;font-size:29px;line-height:29px;color:#333538;font-weight:400;letter-spacing:0.45px;font-family:'Liberation Sans', sans-serif;right:2321.00px;text-align:right;">23</div>
<div class="t" style="top:1359.45px;font-size:29px;line-height:29px;color:#333538;font-weight:400;letter-spacing:0.45px;font-family:'Liberation Sans', sans-serif;right:2057.00px;text-align:right;">$4,258.49</div>
<div class="t" style="top:1359.45px;font-size:29px;line-height:29px;color:#333538;font-weight:400;letter-spacing:0.45px;font-family:'Liberation Sans', sans-serif;right:1816.90px;text-align:right;">$88.06</div>
<div class="t" style="top:1359.45px;font-size:29px;line-height:29px;color:#333538;font-weight:400;letter-spacing:0.45px;font-family:'Liberation Sans', sans-serif;right:1599.20px;text-align:right;">$1,199.80</div>
<div class="t" style="top:1359.45px;font-size:29px;line-height:29px;color:#333538;font-weight:400;letter-spacing:0.45px;font-family:'Liberation Sans', sans-serif;right:1365.90px;text-align:right;">$2,970.63</div>
<div class="t" style="top:1359.45px;font-size:29px;line-height:29px;color:#333538;font-weight:400;letter-spacing:0.45px;font-family:'Liberation Sans', sans-serif;right:1143.70px;text-align:right;">$152.15</div>
<div class="t" style="top:1359.45px;font-size:29px;line-height:29px;color:#333538;font-weight:400;letter-spacing:0.45px;font-family:'Liberation Sans', sans-serif;right:941.50px;text-align:right;">$0.00</div>
<div class="t" style="top:1359.45px;font-size:29px;line-height:29px;color:#333538;font-weight:400;letter-spacing:0.45px;font-family:'Liberation Sans', sans-serif;right:689.50px;text-align:right;">$3,122.78</div>
<div class="t" style="top:1361.48px;font-size:24px;line-height:24px;color:#6b6f75;font-weight:400;letter-spacing:0px;font-family:'Liberation Sans', sans-serif;left:-464.50px;width:1000px;text-align:center;">10</div>
<div class="t" style="top:1438.65px;font-size:29px;line-height:29px;color:#333538;font-weight:400;letter-spacing:0.55px;font-family:'Liberation Sans', sans-serif;left:116.00px;">Oct 26, 2024</div>
<div class="t" style="top:1438.65px;font-size:29px;line-height:29px;color:#333538;font-weight:400;letter-spacing:0.45px;font-family:'Liberation Sans', sans-serif;right:2321.00px;text-align:right;">25</div>
<div class="t" style="top:1438.65px;font-size:29px;line-height:29px;color:#333538;font-weight:400;letter-spacing:0.45px;font-family:'Liberation Sans', sans-serif;right:2057.00px;text-align:right;">$4,073.50</div>
<div class="t" style="top:1438.65px;font-size:29px;line-height:29px;color:#333538;font-weight:400;letter-spacing:0.45px;font-family:'Liberation Sans', sans-serif;right:1816.90px;text-align:right;">$22.52</div>
<div class="t" style="top:1438.65px;font-size:29px;line-height:29px;color:#333538;font-weight:400;letter-spacing:0.45px;font-family:'Liberation Sans', sans-serif;right:1599.20px;text-align:right;">$505.88</div>
<div class="t" style="top:1438.65px;font-size:29px;line-height:29px;color:#333538;font-weight:400;letter-spacing:0.45px;font-family:'Liberation Sans', sans-serif;right:1365.90px;text-align:right;">$3,545.10</div>
<div class="t" style="top:1438.65px;font-size:29px;line-height:29px;color:#333538;font-weight:400;letter-spacing:0.45px;font-family:'Liberation Sans', sans-serif;right:1143.70px;text-align:right;">$187.95</div>
<div class="t" style="top:1438.65px;font-size:29px;line-height:29px;color:#333538;font-weight:400;letter-spacing:0.45px;font-family:'Liberation Sans', sans-serif;right:941.50px;text-align:right;">$0.00</div>
<div class="t" style="top:1438.65px;font-size:29px;line-height:29px;color:#333538;font-weight:400;letter-spacing:0.45px;font-family:'Liberation Sans', sans-serif;right:689.50px;text-align:right;">$3,733.05</div>
<div class="t" style="top:1440.68px;font-size:24px;line-height:24px;color:#6b6f75;font-weight:400;letter-spacing:0px;font-family:'Liberation Sans', sans-serif;left:-464.50px;width:1000px;text-align:center;">11</div>
<div class="r" style="left:2872.50px;top:399.00px;width:24.50px;height:216.00px;background:#f7f7f7;"></div>
<div class="r" style="left:2872.50px;top:615.00px;width:24.50px;height:8.00px;background:#dadee7;"></div>
<div class="r" style="left:2872.50px;top:623.00px;width:24.50px;height:878.00px;background:#ffffff;"></div>
<div class="r" style="left:2875.00px;top:624.00px;width:20.20px;height:378.00px;background:#dcdde0;border-radius:10px;"></div>
<div class="r" style="left:21.50px;top:1551.70px;width:203.70px;height:64.60px;background:#fff;border:2px solid #d3d6da;box-sizing:border-box;border-radius:8px;"></div>
<div class="t" style="top:1570.75px;font-size:29px;line-height:29px;color:#1f2124;font-weight:400;letter-spacing:1.35px;font-family:'Liberation Sans', sans-serif;left:50.00px;">30 records</div>
<div class="r" style="left:2899.00px;top:249.00px;width:101.00px;height:1387.00px;background:#f8f9f9;"></div>
<div class="r" style="left:2897.00px;top:249.00px;width:2.00px;height:1387.00px;background:#e3e5e8;"></div>
<div class="r" style="left:2913.90px;top:290.90px;width:79.10px;height:151.90px;background:#ebecef;border-radius:12px;"></div>
<div class="r" style="left:2918.90px;top:294.80px;width:70.10px;height:71.20px;background:#ffffff;border-radius:10px;"></div>
<svg class="r" style="left:2925px;top:305px;" width="60" height="55" viewBox="2925 305 60 55"><rect x="2935.3" y="314.6" width="36.3" height="33.6" fill="none" stroke="#3a7d3e" stroke-width="3.6"/>
<rect x="2947.2" y="313" width="3.4" height="37" fill="#3a7d3e"/>
<rect x="2934" y="324.1" width="39" height="3.4" fill="#3a7d3e"/>
<rect x="2934" y="335.3" width="39" height="3.4" fill="#3a7d3e"/></svg>
<svg class="r" style="left:2925px;top:370px;" width="60" height="60" viewBox="2925 370 60 60"><rect x="2933" y="393.5" width="9.5" height="31" fill="#5f6166"/>
<rect x="2948.8" y="380" width="9.2" height="44.5" fill="#5f6166"/>
<rect x="2964.5" y="406.8" width="8.9" height="17.7" fill="#5f6166"/></svg>
<svg class="r" style="left:2925px;top:505px;" width="60" height="60" viewBox="2925 505 60 60"><polygon points="2949.20,521.01 2949.66,515.04 2957.14,515.04 2957.60,521.01 2963.59,524.46 2968.99,521.89 2972.72,528.36 2967.79,531.75 2967.79,538.65 2972.72,542.04 2968.99,548.51 2963.59,545.94 2957.60,549.39 2957.14,555.36 2949.66,555.36 2949.20,549.39 2943.21,545.94 2937.81,548.51 2934.08,542.04 2939.01,538.65 2939.01,531.75 2934.08,528.36 2937.81,521.89 2943.21,524.46" fill="none" stroke="#5f6166" stroke-width="4" stroke-linejoin="round"/>
<circle cx="2953.4" cy="535.2" r="6.5" fill="none" stroke="#5f6166" stroke-width="4"/></svg>
<svg class="r" style="left:2925px;top:620px;" width="60" height="60" viewBox="2925 620 60 60"><rect x="2933.2" y="640.5" width="9.2" height="31" fill="#5f6166"/>
<rect x="2949.2" y="627.5" width="8.5" height="44" fill="#5f6166"/>
<rect x="2964.6" y="653.3" width="8.7" height="18.2" fill="#5f6166"/></svg>
<svg class="r" style="left:2925px;top:735px;" width="60" height="60" viewBox="2925 735 60 60"><rect x="2935.7" y="741.3" width="30.5" height="13" rx="2" fill="#5f6166"/>
<path d="M2966,746 H2971.3 V764 H2951.8 V770" fill="none" stroke="#5f6166" stroke-width="4"/>
<rect x="2947.3" y="762.5" width="8.5" height="22.5" rx="2" fill="#5f6166"/></svg>
<svg class="r" style="left:2925px;top:830px;" width="75" height="80" viewBox="2925 830 75 80"><path d="M2938.5,860.5 H2963 L2954.5,871 V894.5 L2947,887 V871 Z" fill="none" stroke="#5f6166" stroke-width="4.2" stroke-linejoin="round"/>
<circle cx="2976.5" cy="855.1" r="16.4" fill="#cccccc"/></svg>
<div class="t" style="top:846.57px;font-size:20px;line-height:20px;color:#222;font-weight:400;letter-spacing:0px;font-family:'Liberation Sans', sans-serif;left:2476.50px;width:1000px;text-align:center;">1</div>
<svg class="r" style="left:2925px;top:945px;" width="75" height="80" viewBox="2925 945 75 80"><path d="M2934,974.8 H2960 L2951,986 V1005 L2944,997 V986 Z" fill="none" stroke="#5f6166" stroke-width="4.2" stroke-linejoin="round"/>
<circle cx="2976.5" cy="969.3" r="16.4" fill="#cccccc"/></svg>
<svg class="r" style="left:2945px;top:985px;" width="45" height="45" viewBox="2945 985 45 45"><circle cx="2966.6" cy="1005.3" r="13" fill="#f8f9f9"/>
<polygon points="2964.33,997.63 2964.60,994.48 2968.60,994.48 2968.87,997.63 2972.11,999.50 2974.96,998.16 2976.97,1001.63 2974.38,1003.43 2974.38,1007.17 2976.97,1008.97 2974.96,1012.44 2972.11,1011.10 2968.87,1012.97 2968.60,1016.12 2964.60,1016.12 2964.33,1012.97 2961.09,1011.10 2958.24,1012.44 2956.23,1008.97 2958.82,1007.17 2958.82,1003.43 2956.23,1001.63 2958.24,998.16 2961.09,999.50" fill="#5f6166"/><circle cx="2966.6" cy="1005.3" r="3.2" fill="#f8f9f9"/></svg>
<div class="t" style="top:960.57px;font-size:20px;line-height:20px;color:#222;font-weight:400;letter-spacing:0px;font-family:'Liberation Sans', sans-serif;left:2476.50px;width:1000px;text-align:center;">0</div>
<svg class="r" style="left:2480px;top:210px;" width="140" height="330" viewBox="2480 210 140 330"><line x1="2602" y1="525.2" x2="2512" y2="268" stroke="#e8412c" stroke-width="6" stroke-linecap="round"/>
<path d="M2500.7,228.2 L2527,274.3 L2507,280.7 Z" fill="#e8412c" stroke="#e8412c" stroke-width="1.5" stroke-linejoin="round"/></svg>
<div class="r" style="left:2435.2px;top:32.9px;width:119.8px;height:77px;background:rgba(0,0,0,0.9);border-radius:5px;box-shadow:0 6px 14px rgba(0,0,0,0.12)"></div>
<svg class="r" style="left:2470px;top:109.9px;" width="50" height="15" viewBox="2470 109.9 50 15"><path d="M2479,109.9 H2508.4 L2494,121 Z" fill="rgba(0,0,0,0.9)"/></svg>
<div class="t" style="top:59.31px;font-size:25.5px;line-height:25.5px;color:#ffffff;font-weight:400;letter-spacing:1.4px;font-family:'Liberation Sans', sans-serif;left:2455.00px;">Export</div>
</body></html>
